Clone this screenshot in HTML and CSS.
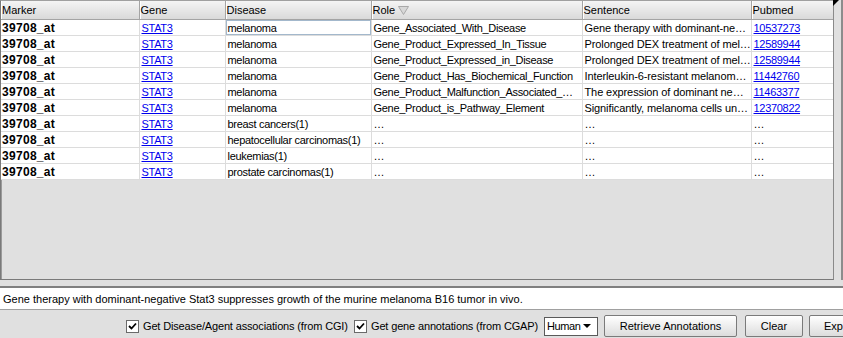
FILE: index.html
```html
<!DOCTYPE html>
<html>
<head>
<meta charset="utf-8">
<link rel="stylesheet" href="styles.css">
</head>
<body>
<div class="app">
  <div class="tablepane">
    <div class="viewport">
      <table class="grid">
        <colgroup>
          <col class="c1"><col class="c2"><col class="c3"><col class="c4"><col class="c5"><col class="c6">
        </colgroup>
        <thead>
          <tr>
            <th>Marker</th>
            <th>Gene</th>
            <th>Disease</th>
            <th><span class="sorthead">Role <svg class="sorticon" width="11" height="9" viewBox="0 0 11 9"><path d="M0.5 0.5 H10.5 L5.5 8.5 Z" fill="#d8d8d8" stroke="#a8a8a8"/></svg></span></th>
            <th>Sentence</th>
            <th>Pubmed</th>
          </tr>
        </thead>
        <tbody>
          <tr><td class="mk">39708_at</td><td><a>STAT3</a></td><td class="focus">melanoma</td><td>Gene_Associated_With_Disease</td><td class="sn">Gene therapy with dominant-ne…</td><td><a>10537273</a></td></tr>
          <tr><td class="mk">39708_at</td><td><a>STAT3</a></td><td>melanoma</td><td>Gene_Product_Expressed_In_Tissue</td><td class="sn">Prolonged DEX treatment of mel…</td><td><a>12589944</a></td></tr>
          <tr><td class="mk">39708_at</td><td><a>STAT3</a></td><td>melanoma</td><td>Gene_Product_Expressed_in_Disease</td><td class="sn">Prolonged DEX treatment of mel…</td><td><a>12589944</a></td></tr>
          <tr><td class="mk">39708_at</td><td><a>STAT3</a></td><td>melanoma</td><td>Gene_Product_Has_Biochemical_Function</td><td class="sn">Interleukin-6-resistant melanom…</td><td><a>11442760</a></td></tr>
          <tr><td class="mk">39708_at</td><td><a>STAT3</a></td><td>melanoma</td><td>Gene_Product_Malfunction_Associated_…</td><td class="sn">The expression of dominant ne…</td><td><a>11463377</a></td></tr>
          <tr><td class="mk">39708_at</td><td><a>STAT3</a></td><td>melanoma</td><td>Gene_Product_is_Pathway_Element</td><td class="sn">Significantly, melanoma cells un…</td><td><a>12370822</a></td></tr>
          <tr><td class="mk">39708_at</td><td><a>STAT3</a></td><td>breast cancers(1)</td><td>…</td><td>…</td><td>…</td></tr>
          <tr><td class="mk">39708_at</td><td><a>STAT3</a></td><td>hepatocellular carcinomas(1)</td><td>…</td><td>…</td><td>…</td></tr>
          <tr><td class="mk">39708_at</td><td><a>STAT3</a></td><td>leukemias(1)</td><td>…</td><td>…</td><td>…</td></tr>
          <tr><td class="mk">39708_at</td><td><a>STAT3</a></td><td>prostate carcinomas(1)</td><td>…</td><td>…</td><td>…</td></tr>
        </tbody>
      </table>
    </div>
    <div class="corner"><svg width="6" height="6" viewBox="0 0 6 6"><path d="M0 0 H6 L0 6 Z" fill="#000"/></svg></div>
    <div class="sidebar"></div>
  </div>
  <div class="field">Gene therapy with dominant-negative Stat3 suppresses growth of the murine melanoma B16 tumor in vivo.</div>
  <div class="controls">
    <label class="check cgi"><span class="box"><svg width="9" height="9" viewBox="0 0 9 9"><path d="M1 4 L3.5 6.5 L8 1.5" fill="none" stroke="#000" stroke-width="1.8"/></svg></span>Get Disease/Agent associations (from CGI)</label>
    <label class="check cgap"><span class="box"><svg width="9" height="9" viewBox="0 0 9 9"><path d="M1 4 L3.5 6.5 L8 1.5" fill="none" stroke="#000" stroke-width="1.8"/></svg></span>Get gene annotations (from CGAP)</label>
    <div class="combo"><span class="combo-text">Human</span><svg width="8" height="4" viewBox="0 0 8 4"><path d="M0 0 H8 L4 4 Z" fill="#000"/></svg></div>
    <button class="btn retrieve">Retrieve Annotations</button>
    <button class="btn clear">Clear</button>
    <button class="btn export">Export</button>
  </div>
</div>
</body>
</html>
```
FILE: styles.css
```css
html, body {
  margin: 0;
  padding: 0;
  background: #e0e0e0;
  overflow: hidden;
}
body {
  font-family: "Liberation Sans", Arial, sans-serif;
  font-size: 11px;
  color: #000;
}
.app {
  width: 843px;
  height: 338px;
  display: flex;
  flex-direction: column;
  overflow: hidden;
}
.tablepane {
  position: relative;
  height: 280px;
  display: flex;
  flex-shrink: 0;
}
.viewport {
  width: 832px;
  height: 278px;
  border-left: 1px solid #7a7a7a;
  border-top: 1px solid #a0a0a0;
  border-bottom: 1px solid #7a7a7a;
  border-right: 1px solid #8a8a8a;
  overflow: hidden;
  background: #e0e0e0;
  box-shadow: inset 1px 0 0 #9a9a9a;
}
.grid {
  border-collapse: collapse;
  table-layout: fixed;
  width: 832px;
}
.c1 { width: 138px; }
.c2 { width: 86px; }
.c3 { width: 146px; }
.c4 { width: 211px; }
.c5 { width: 169px; }
.c6 { width: 82px; }
.grid th {
  height: 18px;
  padding: 0 0 0 1px;
  text-align: left;
  font-weight: normal;
  background: linear-gradient(#f4f4f4, #d9d9d9);
  border-right: 1px solid #a4a4a4;
  border-bottom: 1px solid #a4a4a4;
  box-shadow: inset 1px 0 0 #ffffff;
  white-space: nowrap;
  overflow: hidden;
}
.sorthead {
  display: inline-flex;
  align-items: center;
  gap: 3px;
}
.sorticon { display: block; }
.grid td {
  height: 14px;
  padding: 1px 0 0 2px;
  background: #fff;
  border-right: 1px solid #dcdcdc;
  border-bottom: 1px solid #dcdcdc;
  white-space: nowrap;
  overflow: hidden;
  line-height: 14px;
  letter-spacing: -0.3px;
}
.grid td.sn {
  letter-spacing: -0.1px;
}
.grid td.mk {
  font-weight: bold;
  font-size: 12px;
  padding-left: 1px;
  letter-spacing: 0.3px;
}
.grid td.focus {
  box-shadow: inset 0 0 0 1px #a3b8cc;
}
.grid a {
  color: #0000ee;
  text-decoration: underline;
}
.corner {
  position: absolute;
  left: 833px;
  top: 0;
  width: 6px;
  height: 6px;
}
.corner svg { display: block; }
.sidebar {
  margin-left: 7px;
  width: 2px;
  height: 280px;
  background: #8c8c8c;
}
.field {
  margin-top: 6px;
  height: 20px;
  line-height: 20px;
  padding-top: 1px;
  background: #fff;
  border-top: 2px solid #808080;
  border-bottom: 1px solid #a0a0a0;
  padding-left: 3px;
  white-space: nowrap;
  flex-shrink: 0;
}
.controls {
  display: flex;
  align-items: center;
  padding: 5px 0 0 126px;
  white-space: nowrap;
}
.check {
  display: flex;
  align-items: center;
  gap: 4px;
  letter-spacing: -0.15px;
  flex-shrink: 0;
}
.cgi { width: 228px; }
.cgap { width: 190px; }
.box {
  width: 11px;
  height: 11px;
  border: 1px solid #6a6a6a;
  background: #fff;
  display: flex;
  align-items: center;
  justify-content: center;
  flex-shrink: 0;
}
.box svg { display: block; }
.combo {
  display: flex;
  align-items: center;
  gap: 3px;
  width: 50px;
  height: 17px;
  padding: 0 0 0 2px;
  border: 1px solid #5a5a5a;
  background: #fff;
  margin-right: 6px;
  flex-shrink: 0;
  box-sizing: content-box;
}
.combo-text {
  letter-spacing: -0.4px;
}
.combo svg { display: block; }
.btn {
  font-family: inherit;
  font-size: 11px;
  height: 22px;
  border: 1px solid #7a7a7a;
  border-radius: 2px;
  background: linear-gradient(#ffffff, #dcdcdc);
  color: #000;
  padding: 0;
  flex-shrink: 0;
}
.retrieve { width: 133px; margin-right: 8px; }
.clear { width: 58px; margin-right: 6px; }
.export { width: 70px; text-align: left; padding-left: 14px; }
```
